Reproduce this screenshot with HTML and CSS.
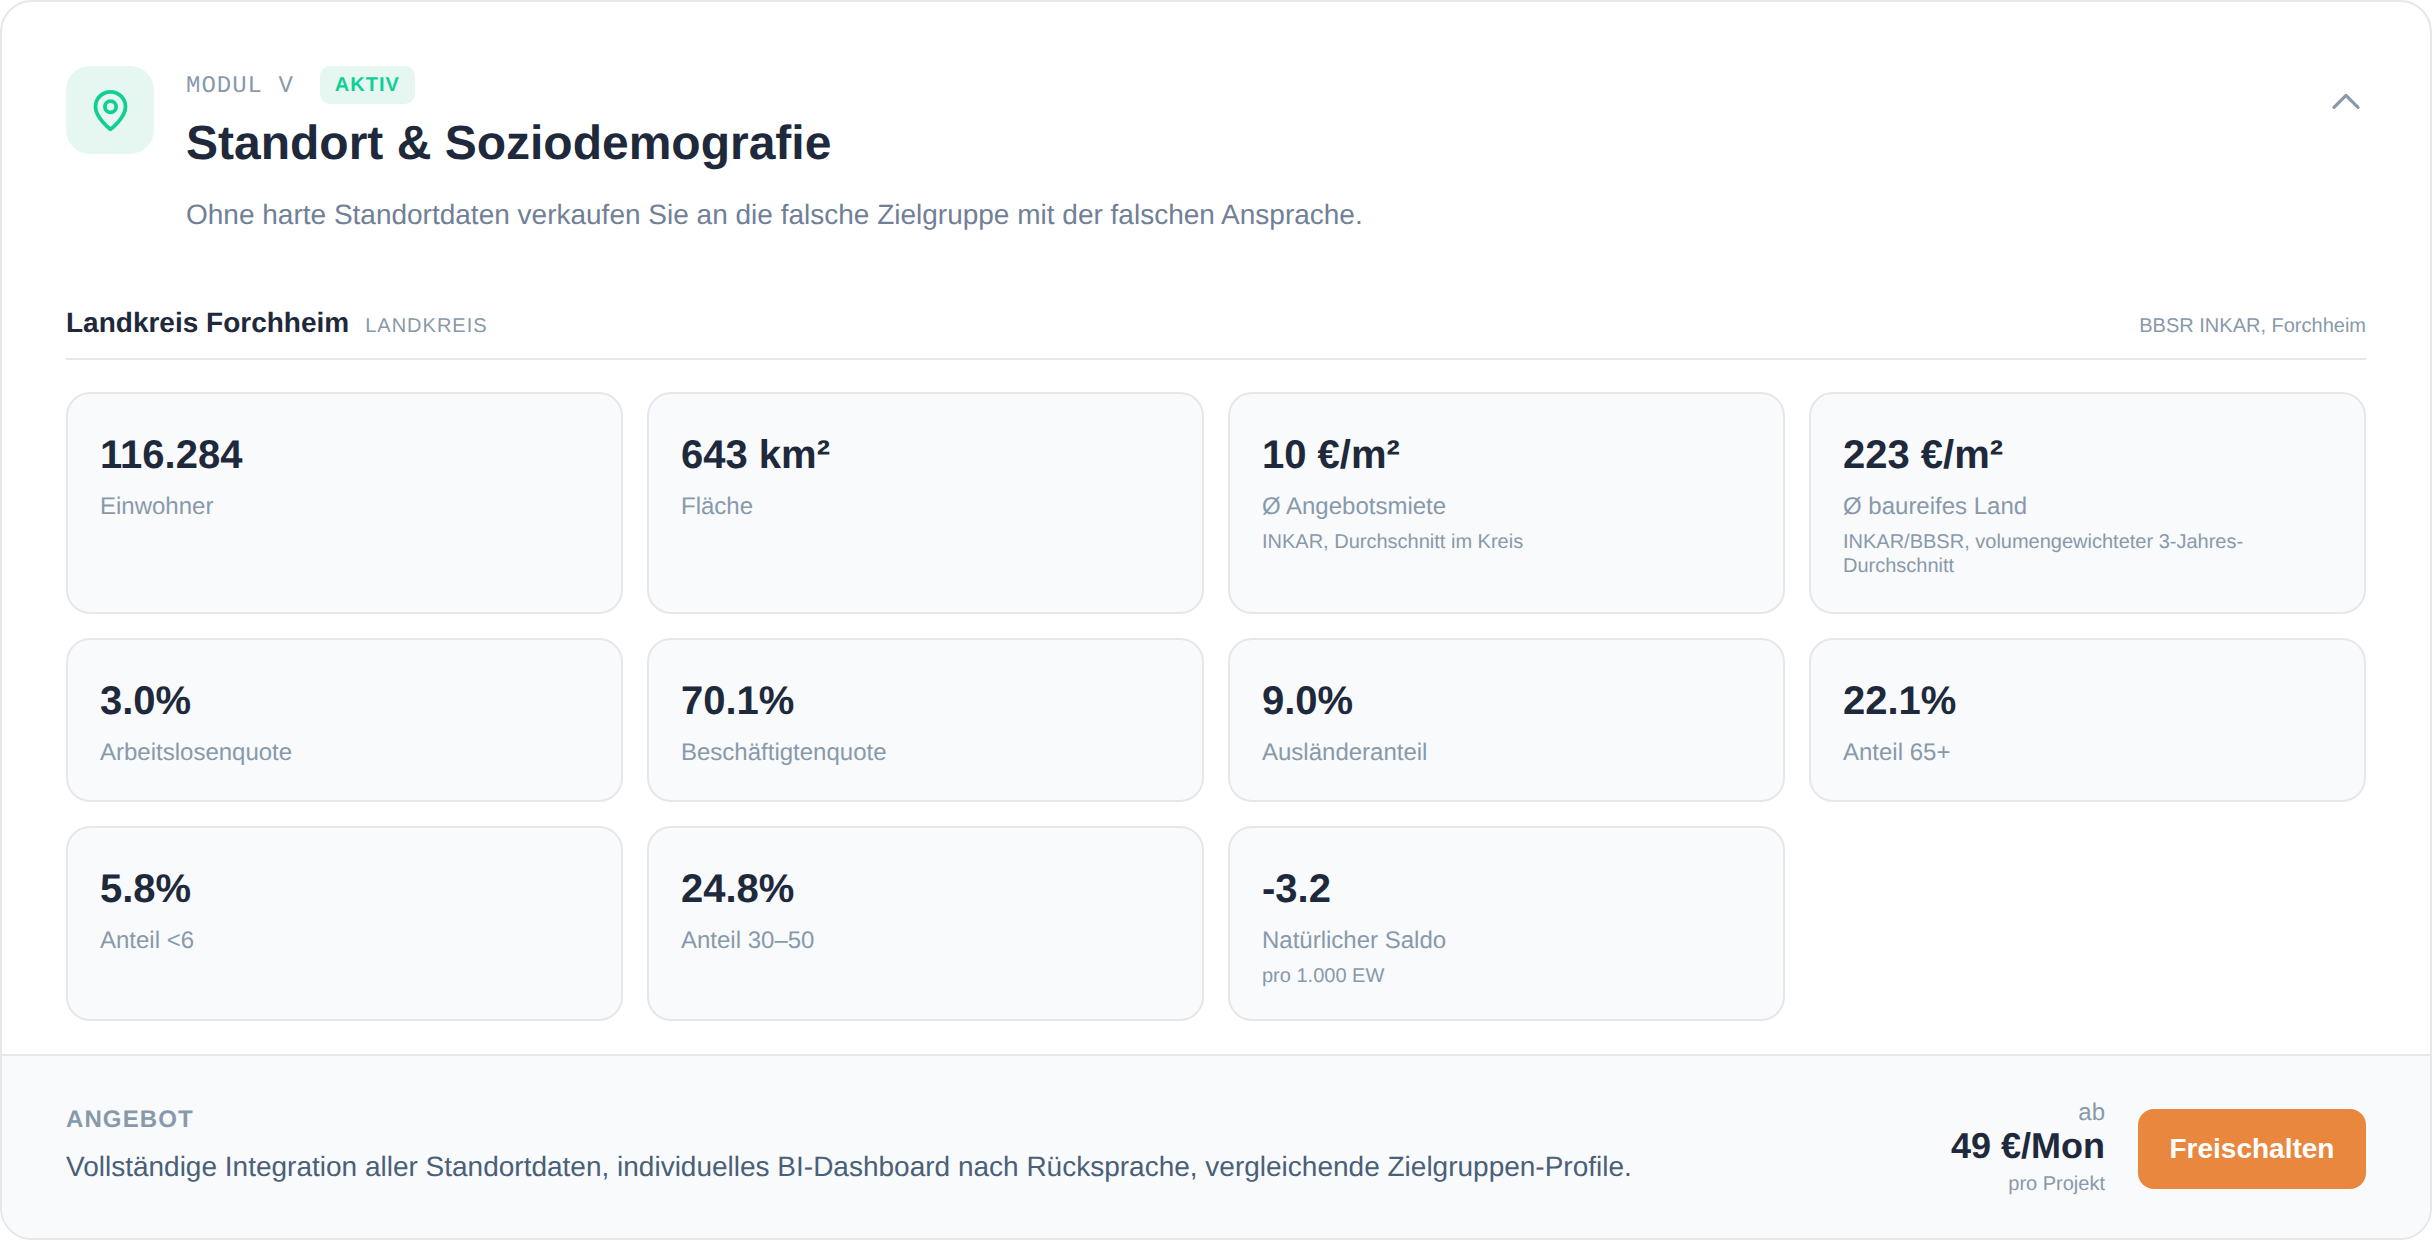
FILE: index.html
```html
<!DOCTYPE html>
<html lang="de">
<head>
    <meta charset="UTF-8">
    <meta name="viewport" content="width=device-width, initial-scale=1.0">
    <title>Standort &amp; Soziodemografie</title>
    <link rel="stylesheet" href="styles.css">
</head>
<body>

<div class="module">
    <div class="module-body">
        <div class="module-head">
            <div class="module-icon">
                <svg width="45" height="45" viewBox="0 0 24 24" fill="none" stroke="#10cf94" stroke-width="2" stroke-linecap="round" stroke-linejoin="round">
                    <path d="M20 10c0 6-8 12-8 12s-8-6-8-12a8 8 0 0 1 16 0Z"/>
                    <circle cx="12" cy="10" r="3"/>
                </svg>
            </div>
            <div class="module-title">
                <div class="module-meta">
                    <span class="module-no">MODUL V</span>
                    <span class="badge">AKTIV</span>
                </div>
                <h1>Standort &amp; Soziodemografie</h1>
                <p>Ohne harte Standortdaten verkaufen Sie an die falsche Zielgruppe mit der falschen Ansprache.</p>
            </div>
            <svg class="chevron" width="30" height="20" viewBox="0 0 30 20" fill="none" stroke="#8899aa" stroke-width="3.2" stroke-linecap="round" stroke-linejoin="round">
                <path d="M3 17.4L15 5.4L27 17.4"/>
            </svg>
        </div>

        <div class="region-head">
            <strong>Landkreis Forchheim</strong>
            <span class="region-type">LANDKREIS</span>
            <span class="region-source">BBSR INKAR, Forchheim</span>
        </div>

        <div class="stats">
            <div class="stat stat-tall">
                <div class="stat-value">116.284</div>
                <div class="stat-label">Einwohner</div>
            </div>
            <div class="stat stat-tall">
                <div class="stat-value">643 km²</div>
                <div class="stat-label">Fläche</div>
            </div>
            <div class="stat stat-tall">
                <div class="stat-value">10 €/m²</div>
                <div class="stat-label">Ø Angebotsmiete</div>
                <div class="stat-note">INKAR, Durchschnitt im Kreis</div>
            </div>
            <div class="stat stat-tall">
                <div class="stat-value">223 €/m²</div>
                <div class="stat-label">Ø baureifes Land</div>
                <div class="stat-note">INKAR/BBSR, volumengewichteter 3-Jahres-Durchschnitt</div>
            </div>
            <div class="stat">
                <div class="stat-value">3.0%</div>
                <div class="stat-label">Arbeitslosenquote</div>
            </div>
            <div class="stat">
                <div class="stat-value">70.1%</div>
                <div class="stat-label">Beschäftigtenquote</div>
            </div>
            <div class="stat">
                <div class="stat-value">9.0%</div>
                <div class="stat-label">Ausländeranteil</div>
            </div>
            <div class="stat">
                <div class="stat-value">22.1%</div>
                <div class="stat-label">Anteil 65+</div>
            </div>
            <div class="stat">
                <div class="stat-value">5.8%</div>
                <div class="stat-label">Anteil &lt;6</div>
            </div>
            <div class="stat">
                <div class="stat-value">24.8%</div>
                <div class="stat-label">Anteil 30–50</div>
            </div>
            <div class="stat">
                <div class="stat-value">-3.2</div>
                <div class="stat-label">Natürlicher Saldo</div>
                <div class="stat-note">pro 1.000 EW</div>
            </div>
        </div>
    </div>

    <div class="offer">
        <div class="offer-text">
            <div class="offer-label">ANGEBOT</div>
            <div class="offer-desc">Vollständige Integration aller Standortdaten, individuelles BI-Dashboard nach Rücksprache, vergleichende Zielgruppen-Profile.</div>
        </div>
        <div class="price">
            <div class="price-from">ab</div>
            <div class="price-value">49 €/Mon</div>
            <div class="price-note">pro Projekt</div>
        </div>
        <button class="unlock">Freischalten</button>
    </div>
</div>

</body>
</html>
```

FILE: styles.css
```css
html, body {
    height: 100%;
}
body {
    margin: 0;
    background-color: #fff;
    font-family: "Liberation Sans", Arial, sans-serif;
    color: #1e293b;
    text-rendering: geometricPrecision;
}
.module {
    box-sizing: border-box;
    height: 1240px;
    display: flex;
    flex-direction: column;
    border: 2px solid #e5e7eb;
    border-radius: 32px;
    overflow: hidden;
}
.module-body {
    flex: 1;
    padding: 64px 64px 0;
}
/* Header */
.module-head {
    display: flex;
    align-items: flex-start;
    gap: 32px;
}
.module-icon {
    width: 88px;
    height: 88px;
    flex-shrink: 0;
    display: flex;
    align-items: center;
    justify-content: center;
    background-color: #e6f7f1;
    border-radius: 24px;
}
.module-title {
    flex: 1;
}
.module-meta {
    display: flex;
    align-items: center;
    gap: 26px;
    height: 38px;
}
.module-no {
    padding-top: 3px;
    font-family: "Liberation Mono", monospace;
    font-size: 24px;
    letter-spacing: 1px;
    color: #8899aa;
}
.badge {
    padding: 1px 15px 0;
    line-height: 37px;
    font-size: 20px;
    font-weight: bold;
    letter-spacing: 1px;
    color: #10cf94;
    background-color: #e6f7f1;
    border-radius: 10px;
}
h1 {
    margin: 10px 0 0;
    font-size: 48px;
    line-height: 60px;
}
.module-title p {
    margin: 23px 0 0;
    font-size: 28px;
    line-height: 36px;
    color: #718096;
}
.chevron {
    margin: 24px 5px 0 0;
}
/* Region line */
.region-head {
    display: flex;
    align-items: baseline;
    margin-top: 74px;
    padding-bottom: 19px;
    border-bottom: 2px solid #e5e7eb;
}
.region-head strong {
    font-size: 28px;
}
.region-type {
    margin-left: 16px;
    font-size: 20px;
    letter-spacing: 1px;
    color: #8899aa;
}
.region-source {
    margin-left: auto;
    font-size: 20px;
    color: #8899aa;
}
/* Stat cards */
.stats {
    display: grid;
    grid-template-columns: repeat(4, 1fr);
    gap: 24px;
    margin-top: 32px;
}
.stat {
    box-sizing: border-box;
    min-height: 164px;
    padding: 37px 32px 31px;
    background-color: #f8fafc;
    border: 2px solid #e5e7eb;
    border-radius: 24px;
}
.stat-tall {
    min-height: 222px;
}
.stat-value {
    font-size: 40px;
    font-weight: bold;
    line-height: 48px;
}
.stat-label {
    margin-top: 12px;
    font-size: 24px;
    line-height: 32px;
    color: #8899aa;
}
.stat-note {
    margin-top: 7px;
    font-size: 20px;
    line-height: 24px;
    color: #8899aa;
}
/* Footer offer */
.offer {
    display: flex;
    align-items: center;
    height: 184px;
    box-sizing: border-box;
    padding: 0 64px;
    background-color: #f8fafc;
    border-top: 2px solid #e5e7eb;
}
.offer-text {
    flex: 1;
    padding-bottom: 3px;
}
.offer-label {
    font-size: 24px;
    font-weight: bold;
    letter-spacing: 1.1px;
    color: #8899aa;
}
.offer-desc {
    margin-top: 15px;
    font-size: 28px;
    line-height: 36px;
    color: #4a5f78;
}
.price {
    margin-right: 33px;
    text-align: right;
}
.price-from {
    font-size: 24px;
    line-height: 28px;
    color: #8899aa;
}
.price-value {
    font-size: 36px;
    font-weight: bold;
    line-height: 38px;
}
.price-note {
    margin-top: 7px;
    font-size: 20px;
    line-height: 24px;
    color: #8899aa;
}
.unlock {
    width: 228px;
    height: 80px;
    margin-top: 3px;
    font-family: inherit;
    font-size: 28px;
    font-weight: bold;
    color: #fff;
    background-color: #e9873f;
    border: 0;
    border-radius: 16px;
}
```
